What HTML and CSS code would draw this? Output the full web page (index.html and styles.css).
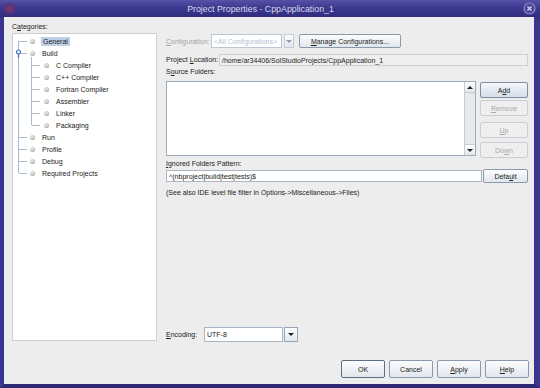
FILE: index.html
```html
<!DOCTYPE html>
<html lang="en">
<head>
  <meta charset="UTF-8">
  <title>Project Properties - CppApplication_1</title>
  <link rel="stylesheet" href="styles.css">
</head>
<body>
  <div class="window">
    <div class="titlebar">
      <span class="wm-icon"></span>
      <span class="title">Project Properties - CppApplication_1</span>
      <span class="close">
        <svg width="13" height="13" viewBox="0 0 13 13">
          <circle cx="6.5" cy="6.5" r="5.5" fill="#4a469c" stroke="#8f8cc6" stroke-width="1.2"/>
          <path d="M4.5 4.5 L8.5 8.5 M8.5 4.5 L4.5 8.5" stroke="#d6d4ee" stroke-width="1.3"/>
        </svg>
      </span>
    </div>

    <div class="frame">
      <div class="main">
        <!-- categories tree -->
        <div class="left">
          <div class="lbl">C<u>a</u>tegories:</div>
          <div class="tree">
            <ul class="top">
              <li><div class="node"><i class="dot"></i><span class="sel">General</span></div></li>
              <li>
                <div class="node">
                  <svg class="handle" width="7" height="9" viewBox="0 0 7 9">
                    <circle cx="3.5" cy="3" r="2" fill="#fff" stroke="#3f6fc4" stroke-width="1.2"/>
                    <path d="M3.5 5 V9" stroke="#3f6fc4" stroke-width="1.2"/>
                  </svg>
                  <i class="dot"></i><span>Build</span>
                </div>
                <ul class="sub">
                  <li><div class="node"><i class="dot"></i><span>C Compiler</span></div></li>
                  <li><div class="node"><i class="dot"></i><span>C++ Compiler</span></div></li>
                  <li><div class="node"><i class="dot"></i><span>Fortran Compiler</span></div></li>
                  <li><div class="node"><i class="dot"></i><span>Assembler</span></div></li>
                  <li><div class="node"><i class="dot"></i><span>Linker</span></div></li>
                  <li><div class="node"><i class="dot"></i><span>Packaging</span></div></li>
                </ul>
              </li>
              <li><div class="node"><i class="dot"></i><span>Run</span></div></li>
              <li><div class="node"><i class="dot"></i><span>Profile</span></div></li>
              <li><div class="node"><i class="dot"></i><span>Debug</span></div></li>
              <li><div class="node"><i class="dot"></i><span>Required Projects</span></div></li>
            </ul>
          </div>
        </div>

        <!-- general panel -->
        <div class="right">
          <div class="row-config">
            <span class="lbl-config"><u>C</u>onfiguration:</span>
            <span class="combo off">&lt;All Configurations&gt;</span>
            <span class="arrow off"><i class="tri"></i></span>
            <span class="btn manage"><u>M</u>anage Configurations...</span>
          </div>

          <div class="row-loc">
            <span class="lbl-loc">Project <u>L</u>ocation:</span>
            <span class="field ro">/home/ar34406/SolStudioProjects/CppApplication_1</span>
          </div>

          <div class="lbl lbl-source">S<u>o</u>urce Folders:</div>
          <div class="list-row">
            <div class="list">
              <div class="scroll">
                <span class="sb-btn"><i class="tri up"></i></span>
                <span class="sb-track"></span>
                <span class="sb-btn"><i class="tri"></i></span>
              </div>
            </div>
            <div class="side-btns">
              <span class="btn add">A<u>d</u>d</span>
              <span class="btn off remove"><u>R</u>emove</span>
              <span class="btn off up-btn"><u>U</u>p</span>
              <span class="btn off down-btn">Do<u>w</u>n</span>
            </div>
          </div>

          <div class="lbl lbl-ignored"><u>I</u>gnored Folders Pattern:</div>
          <div class="row-pattern">
            <span class="field">^(nbproject|build|test|tests)$</span>
            <span class="btn default">Defa<u>u</u>lt</span>
          </div>
          <div class="lbl hint">(See also IDE level file filter in Options-&gt;Miscellaneous-&gt;Files)</div>

          <div class="spacer"></div>

          <div class="row-enc">
            <span class="lbl-enc"><u>E</u>ncoding:</span>
            <span class="combo enc">UTF-8</span>
            <span class="arrow enc-arrow"><i class="tri"></i></span>
          </div>
        </div>
      </div>

      <div class="footer">
        <span class="btn ok">OK</span>
        <span class="btn">Cancel</span>
        <span class="btn"><u>A</u>pply</span>
        <span class="btn"><u>H</u>elp</span>
      </div>
    </div>
  </div>
</body>
</html>
```

FILE: styles.css
```css
body {
  margin: 0;
  padding: 0;
  font-family: 'Liberation Sans', Arial, sans-serif;
  font-size: 7px;
  color: #222;
  background: #2e2a76;
}

u {
  text-decoration-thickness: 1px;
  text-underline-offset: 1px;
}

.window {
  width: 540px;
  height: 388px;
  display: flex;
  flex-direction: column;
  overflow: hidden;
}

/* title bar */
.titlebar {
  height: 17px;
  display: flex;
  align-items: center;
  background: linear-gradient(#5652a8, #3d398f 45%, #302c7e);
  flex-shrink: 0;
}

.wm-icon {
  width: 12px;
  height: 12px;
  margin-left: 4px;
  border-radius: 50%;
  background: radial-gradient(circle at 45% 45%, #7a3a6a, #4a2f7e 70%, #3d398f);
}

.title {
  flex: 1;
  text-align: center;
  padding-right: 18px;
  font-size: 8.8px;
  color: #d9d8ea;
}

.close {
  width: 13px;
  height: 13px;
  margin-right: 4px;
  display: flex;
}

/* frame */
.frame {
  flex: 1;
  display: flex;
  flex-direction: column;
  background: #ededed;
  border-left: 4px solid #3a3690;
  border-right: 6px solid #3a3690;
  border-bottom: 4px solid #2c2874;
}

.main {
  height: 320px;
  padding: 5px 6px 0 8px;
  display: flex;
  gap: 9px;
}

.lbl {
  height: 10px;
  line-height: 10px;
  white-space: nowrap;
}

/* tree */
.left {
  width: 145px;
  display: flex;
  flex-direction: column;
}

.left .lbl {
  margin-bottom: 1px;
}

.tree {
  flex: 1;
  margin-bottom: 1px;
  background: #fff;
  border: 1px solid #cfcfcf;
  padding-top: 1px;
}

.tree ul {
  list-style: none;
  margin: 0;
  padding: 0;
  position: relative;
}

.tree ul::before {
  content: "";
  position: absolute;
  border-left: 1px solid #a9b9d0;
  bottom: 6px;
}

.top::before {
  left: 5px;
  top: 6px;
}

.sub::before {
  left: 18px;
  top: -2px;
}

.node {
  height: 12px;
  display: flex;
  align-items: center;
  padding-left: 17px;
  position: relative;
}

.node::before {
  content: "";
  position: absolute;
  top: 6px;
  left: 6px;
  width: 8px;
  border-top: 1px solid #a9b9d0;
}

.sub .node {
  padding-left: 31px;
}

.sub .node::before {
  left: 19px;
}

.handle {
  position: absolute;
  left: 2px;
  top: 2px;
}

.dot {
  width: 5px;
  height: 5px;
  border-radius: 50%;
  margin-right: 7px;
  background: radial-gradient(circle at 40% 35%, #f4f4f4, #b9b9b9 60%, #8d8d8d);
}

.sel {
  background: #bdd0e6;
  padding: 1px 2px;
  margin-left: -1px;
}

/* right side */
.right {
  flex: 1;
  display: flex;
  flex-direction: column;
  padding-top: 12px;
}

.row-config {
  height: 14px;
  display: flex;
  align-items: stretch;
}

.lbl-config {
  width: 45px;
  color: #a3a3a3;
  align-self: center;
}

.combo {
  width: 71px;
  border: 1px solid #b9c6d4;
  background: #fff;
  padding-left: 2px;
  display: flex;
  align-items: center;
  box-sizing: border-box;
}

.combo.off {
  color: #b4bfd0;
}

.arrow {
  width: 10px;
  margin-left: 2px;
  border: 1px solid #aebbc9;
  background: linear-gradient(#fbfcfd, #e2e8ee);
  display: flex;
  align-items: center;
  justify-content: center;
  box-sizing: border-box;
}

.arrow.off {
  border-color: #c5ced8;
}

.tri {
  width: 0;
  height: 0;
  border-left: 3px solid transparent;
  border-right: 3px solid transparent;
  border-top: 3px solid #222;
}

.arrow.off .tri {
  border-top-color: #8d9cb1;
}

.tri.up {
  border-top: none;
  border-bottom: 3px solid #222;
}

.btn {
  display: flex;
  align-items: center;
  justify-content: center;
  box-sizing: border-box;
  border: 1px solid #8a99ab;
  border-radius: 2px;
  background: linear-gradient(#fcfdfe, #e0e6ed);
  white-space: nowrap;
}

.btn.off {
  border-color: #c9ced4;
  background: #efefef;
  color: #a8a8a8;
}

.manage {
  width: 102px;
  margin-left: 5px;
}

.row-loc {
  height: 12px;
  margin-top: 6px;
  display: flex;
  gap: 1px;
}

.lbl-loc {
  width: 52px;
  line-height: 12px;
  white-space: nowrap;
}

.field {
  flex: 1;
  border: 1px solid #c9d1da;
  background: #fff;
  padding-left: 2px;
  display: flex;
  align-items: center;
  box-sizing: border-box;
  white-space: nowrap;
}

.field.ro {
  background: #efefef;
}

.lbl-source {
  margin-top: 1px;
}

.list-row {
  height: 77px;
  margin-top: 4px;
  display: flex;
  gap: 4px;
}

.list {
  width: 310px;
  height: 75px;
  box-sizing: border-box;
  border: 1px solid #9eabb9;
  background: #fff;
  display: flex;
  justify-content: flex-end;
}

.scroll {
  width: 10px;
  border-left: 1px solid #c6ccd3;
  background: #e6e8ea;
  display: flex;
  flex-direction: column;
}

.sb-btn {
  height: 10px;
  background: linear-gradient(#fdfdfd, #e4e7ea);
  border-bottom: 1px solid #c6ccd3;
  display: flex;
  align-items: center;
  justify-content: center;
}

.sb-btn:last-child {
  border-bottom: none;
  border-top: 1px solid #c6ccd3;
}

.sb-track {
  flex: 1;
}

.side-btns {
  width: 48px;
  display: flex;
  flex-direction: column;
}

.side-btns .btn {
  height: 16px;
}

.add {
  margin-top: 1px;
  background: linear-gradient(#f4f7fb, #d5dee9);
  border-color: #7f90a5;
}

.remove {
  margin-top: 2px;
}

.up-btn {
  margin-top: 6px;
}

.down-btn {
  margin-top: 4px;
}

.lbl-ignored {
  margin-top: 1px;
}

.row-pattern {
  height: 14px;
  display: flex;
  align-items: center;
  gap: 1px;
}

.row-pattern .field {
  height: 12px;
  border-color: #a9b6c4;
}

.default {
  width: 45px;
  height: 14px;
}

.hint {
  margin-top: 5px;
}

.spacer {
  flex: 1;
}

.row-enc {
  height: 15px;
  display: flex;
  align-items: stretch;
}

.lbl-enc {
  width: 38px;
  align-self: center;
}

.combo.enc {
  width: 79px;
  border-color: #a9b6c4;
}

.enc-arrow {
  width: 14px;
  margin-left: 1px;
  border-color: #97a6b7;
}

/* dialog buttons */
.footer {
  height: 18px;
  padding: 18px 5px 6px 0;
  display: flex;
  justify-content: flex-end;
  gap: 4px;
}

.footer .btn {
  width: 44px;
}

.footer .ok {
  border-color: #5d6e85;
}
```
